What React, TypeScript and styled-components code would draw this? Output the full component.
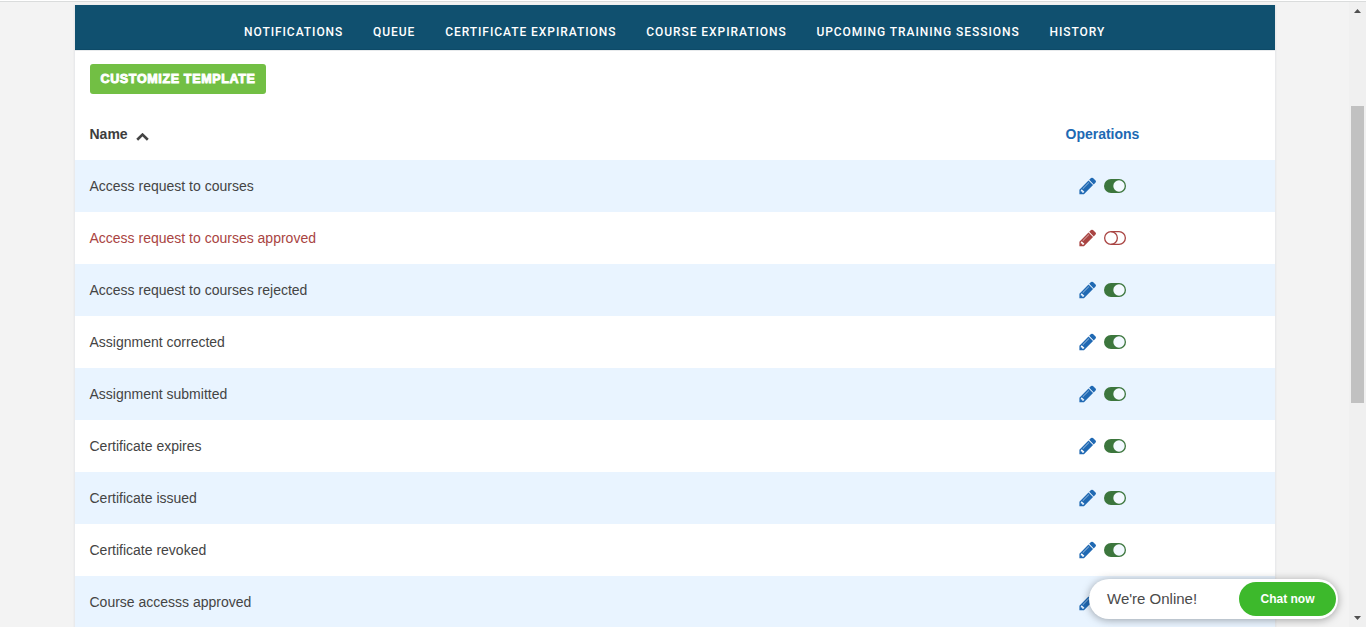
import React from 'react';
import styled, { createGlobalStyle } from 'styled-components';

const GlobalStyle = createGlobalStyle`
  * { box-sizing: border-box; }
  html, body { margin: 0; height: 100%; overflow: hidden; }
  body { background: #f3f3f3; font-family: "Liberation Sans", Arial, sans-serif; font-size: 14px; color: #444; }
`;

const Window = styled.div`
  display: flex;
  height: 627px;
  border-top: 1px solid #fff;
  overflow: hidden;
`;

const Page = styled.main`
  flex: 1;
  border-top: 1px solid #dadcdc;
  padding: 3px 73px 0 74px;
`;

const Panel = styled.section`
  width: 1202px;
  height: 640px;
  border: solid #e9eaec;
  border-width: 0 1px;
  background: #fff;
  box-shadow: 0 0 2px rgba(0, 0, 0, 0.05);
`;

const NavBar = styled.nav`
  display: flex;
  gap: 29.85px;
  height: 45px;
  padding: 9px 0 0 169px;
  align-items: center;
  background: #10506f;
  border-bottom: 1px solid #0d4a68;
  box-shadow: 0 1px 0 #e7eaec;
`;

const NavLink = styled.a`
  font: 500 12px/20px Roboto, sans-serif;
  letter-spacing: 0.94px;
  color: #fff;
  white-space: nowrap;
`;

const Toolbar = styled.div`
  display: flex;
  align-items: flex-start;
  height: 58px;
  padding: 14px 15px 0;
`;

const TemplateButton = styled.button`
  width: 176px;
  height: 30px;
  padding: 0 0 2px;
  border: 0;
  border-radius: 3px;
  background: #72bf44;
  color: #fff;
  font: bold 12.5px/28px "Liberation Sans", Arial, sans-serif;
  letter-spacing: 0.65px;
  -webkit-text-stroke: 0.9px #fff;
  white-space: nowrap;
`;

const TemplateLabel = styled.span`
  display: block;
  padding-top: 1px;
`;

const Row = styled.div<{ $striped?: boolean; $off?: boolean }>`
  display: flex;
  align-items: center;
  height: 52px;
  padding-left: 14.5px;
  background: ${p => (p.$striped ? '#e9f4ff' : '#fff')};
  color: ${p => (p.$off ? '#a94442' : '#444')};
`;

const Name = styled.span`
  flex: 1;
`;

const HeaderName = styled.strong`
  display: flex;
  flex: 1;
  gap: 8px;
  align-items: center;
  color: #3d3d3d;
`;

const HeaderOperations = styled.strong`
  width: 209.5px;
  color: #2069b3;
`;

const Operations = styled.div`
  display: flex;
  align-items: center;
  gap: 6.9px;
  width: 197.5px;
`;

const Svg = styled.svg`
  display: block;
  flex: none;
`;

const Caret = styled(Svg)`
  margin-top: 5px;
`;

const Scrollbar = styled.aside`
  display: flex;
  flex-direction: column;
  align-items: flex-start;
  width: 17px;
  padding: 7px 0 7px 2px;
  border-top: 1px solid #dadcdc;
  background: #f0f0f0;
`;

const ScrollArrow = styled(Svg)`
  margin-left: 3px;
`;

const Thumb = styled.div`
  width: 13px;
  height: 297px;
  margin: 93px 0 auto;
  background: #c1c1c1;
`;

const Chat = styled.div`
  position: absolute;
  left: 1089px;
  top: 579px;
  display: flex;
  align-items: center;
  justify-content: space-between;
  width: 249px;
  height: 40px;
  padding: 0 2px 0 18px;
  border-radius: 20px;
  background: #fff;
  box-shadow: 0 1px 8px rgba(0, 0, 0, 0.35);
  color: #4a4a4a;
  font-size: 15px;
`;

const ChatLabel = styled.span`
  padding-bottom: 2px;
`;

const ChatButton = styled.button`
  width: 97px;
  height: 34px;
  padding: 0;
  border: 0;
  border-radius: 17px;
  background: #3db92c;
  color: #fff;
  font: bold 12px "Liberation Sans", Arial, sans-serif;
`;

const Pencil = ({ color }: { color: string }) => (
  <Svg width="19.6" height="19.6" viewBox="0 0 1792 1792" fill={color}>
    <path d="M491 1536l91-91-235-235-91 91v107h128v128h107zm523-928q0-22-22-22-10 0-17 7l-542 542q-7 7-7 17 0 22 22 22 10 0 17-7l542-542q7-7 7-17zm-54-192l416 416-832 832h-416v-416zm683 96q0 53-37 90l-166 166-416-416 166-165q36-38 90-38 53 0 91 38l235 234q37 39 37 91z" />
  </Svg>
);

const Toggle = ({ on }: { on: boolean }) => (
  <Svg width="22" height="14" viewBox="0 0 22 14">
    {on ? (
      <>
        <rect width="22" height="14" rx="7" fill="#3c763d" />
        <circle cx="15" cy="7" r="5.7" fill="#f3f9ff" />
      </>
    ) : (
      <g fill="none" stroke="#a94442" strokeWidth="1.3">
        <rect x=".65" y=".65" width="20.7" height="12.7" rx="6.35" />
        <path d="M7 .65a6.35 6.35 0 0 1 0 12.7" />
      </g>
    )}
  </Svg>
);

const links = ['NOTIFICATIONS', 'QUEUE', 'CERTIFICATE EXPIRATIONS', 'COURSE EXPIRATIONS', 'UPCOMING TRAINING SESSIONS', 'HISTORY'];

const templates = [
  { name: 'Access request to courses', on: true },
  { name: 'Access request to courses approved', on: false },
  { name: 'Access request to courses rejected', on: true },
  { name: 'Assignment corrected', on: true },
  { name: 'Assignment submitted', on: true },
  { name: 'Certificate expires', on: true },
  { name: 'Certificate issued', on: true },
  { name: 'Certificate revoked', on: true },
  { name: 'Course accesss approved', on: true },
];

export default function App() {
  return (
    <>
      <GlobalStyle />
      <Window>
        <Page>
          <Panel>
            <NavBar>
              {links.map(link => <NavLink key={link}>{link}</NavLink>)}
            </NavBar>
            <Toolbar>
              <TemplateButton><TemplateLabel>CUSTOMIZE TEMPLATE</TemplateLabel></TemplateButton>
            </Toolbar>
            <Row>
              <HeaderName>
                Name
                <Caret width="13" height="8" viewBox="0 0 13 8">
                  <path d="M1.2 6.8L6.5 1.6l5.3 5.2" fill="none" stroke="#444" strokeWidth="2.6" />
                </Caret>
              </HeaderName>
              <HeaderOperations>Operations</HeaderOperations>
            </Row>
            {templates.map(({ name, on }, i) => (
              <Row key={name} $striped={i % 2 === 0} $off={!on}>
                <Name>{name}</Name>
                <Operations>
                  <Pencil color={on ? '#2069b3' : '#a94442'} />
                  <Toggle on={on} />
                </Operations>
              </Row>
            ))}
          </Panel>
        </Page>
        <Scrollbar>
          <ScrollArrow width="7" height="4" viewBox="0 0 7 4"><path d="M0 4L3.5 0 7 4z" fill="#505050" /></ScrollArrow>
          <Thumb />
          <ScrollArrow width="7" height="4" viewBox="0 0 7 4"><path d="M0 0h7L3.5 4z" fill="#505050" /></ScrollArrow>
        </Scrollbar>
      </Window>
      <Chat>
        <ChatLabel>We're Online!</ChatLabel>
        <ChatButton>Chat now</ChatButton>
      </Chat>
    </>
  );
}
